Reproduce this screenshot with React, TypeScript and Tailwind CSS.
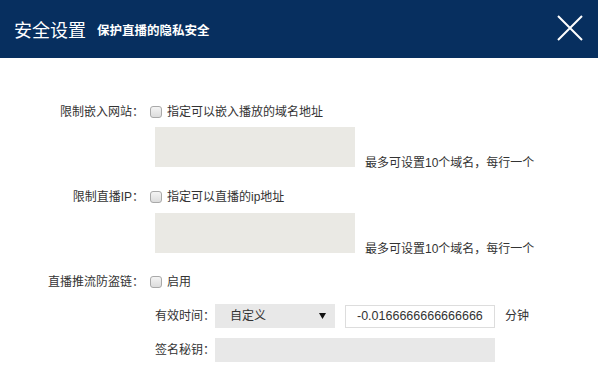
import React from "react";

const font = { fontFamily: '"Liberation Sans", "Noto Sans CJK SC", sans-serif' };

function Check() {
	return (
		<span className="inline-block h-3 w-3 shrink-0 rounded-[3px] border border-[#a9a9a9] bg-gradient-to-b from-[#f4f4f4] to-[#dcdcdc]" />
	);
}

function Row({ label, text }: { label: string; text: string }) {
	return (
		<div className="flex h-5 items-center">
			<span className="w-[144px] text-right">{label}</span>
			<span className="ml-[6px] flex items-center">
				<Check />
			</span>
			<span className="ml-[5px]">{text}</span>
		</div>
	);
}

function Area() {
	return (
		<div className="flex items-end pl-[155px]">
			<div className="h-10 w-[200px] bg-[#eae9e4]" />
			<span className="-mb-1 ml-[10px] leading-4">最多可设置10个域名，每行一个</span>
		</div>
	);
}

export default function App() {
	return (
		<div className="h-[377px] w-[598px] bg-white text-[12px] text-[#333]" style={font}>
			<header className="flex h-[58px] items-center justify-between bg-[#072f5f] pl-[14px] pr-[15px] text-white">
				<div className="flex items-center pt-1">
					<h1 className="text-[18px] leading-none">安全设置</h1>
					<p className="ml-[11px] text-[12.5px] font-bold leading-none">保护直播的隐私安全</p>
				</div>
				<svg width="26" height="26" viewBox="0 0 26 26" className="mt-[-2px]">
					<path d="M1 1 L25 25 M25 1 L1 25" stroke="#fff" strokeWidth="2" fill="none" />
				</svg>
			</header>

			<div className="flex flex-col pt-[44px]">
				<Row label="限制嵌入网站：" text="指定可以嵌入播放的域名地址" />
				<div className="mt-[5px]">
					<Area />
				</div>

				<div className="mt-5">
					<Row label="限制直播IP：" text="指定可以直播的ip地址" />
				</div>
				<div className="mt-[6px]">
					<Area />
				</div>

				<div className="mt-[19px]">
					<Row label="直播推流防盗链：" text="启用" />
				</div>

				<div className="mt-3 flex items-center pl-[153px]">
					<span className="w-[62px] text-right">有效时间：</span>
					<div className="flex h-6 w-[120px] items-center justify-between bg-[#e8e8e8] pl-[15px] pr-[9px]">
						<span>自定义</span>
						<svg width="7" height="6" viewBox="0 0 7 6">
							<path d="M0 0 H7 L3.5 6 Z" fill="#111" />
						</svg>
					</div>
					<div className="ml-[10px] flex h-[23px] w-[150px] items-center border border-[#dddddd] pl-[11px] text-[12.5px]">
						-0.0166666666666666
					</div>
					<span className="ml-[10px]">分钟</span>
				</div>

				<div className="mt-[10px] flex items-center pl-[153px]">
					<span className="w-[62px] text-right">签名秘钥：</span>
					<div className="h-6 w-[280px] bg-[#e8e8e8]" />
				</div>
			</div>
		</div>
	);
}
